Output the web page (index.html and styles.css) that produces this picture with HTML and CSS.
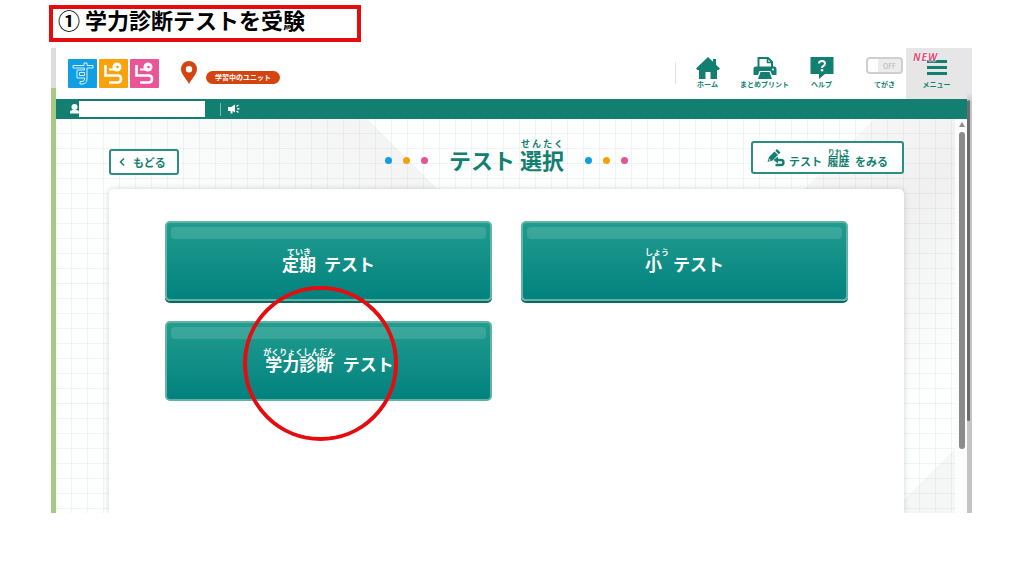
FILE: index.html
```html
<!DOCTYPE html>
<html lang="ja">
<head>
    <meta charset="UTF-8">
    <title>学力診断テストを受験</title>
    <link rel="stylesheet" href="styles.css">
</head>
<body>
    <h1 class="step-title">① 学力診断テストを受験</h1>

    <div class="window">
        <div class="edge edge-left"></div>

        <div class="app">
            <header class="header">
                <svg class="logo" viewBox="0 0 91 29" fill="none" role="img" aria-label="すらら">
                    <rect width="29" height="29" rx="1" fill="#109fe2"/>
                    <rect x="31" width="29" height="29" rx="1" fill="#f8a30c"/>
                    <rect x="62" width="29" height="29" rx="1" fill="#ea5598"/>
                    <path d="M5 6.500H16V4H19V6.500H25V9H19V20Q19 25 14 25H12V22.500H14Q16.500 22.500 16.500 20V19H9V11H16.500V9H5ZM11.500 13.500V16.500H16.500V13.500Z" stroke="#d9f2fc" stroke-width="1"/>
                    <g stroke="#fff" stroke-width="2.600">
                        <path d="M37.500 6V16.500H50Q53 16.500 53 20T49.500 23.500H41"/>
                        <path d="M68.500 6V16.500H81Q84 16.500 84 20T80.500 23.500H72"/>
                    </g>
                    <path d="M41 10.500H47M72 10.500H78" stroke="#fff" stroke-width="2"/>
                    <circle cx="49" cy="8" r="4.500" fill="#fff"/>
                    <circle cx="80" cy="8" r="4.500" fill="#fff"/>
                    <circle cx="49.500" cy="8" r="1.300" fill="#f8a30c"/>
                    <circle cx="80.500" cy="8" r="1.300" fill="#ea5598"/>
                </svg>
                <svg class="pin" viewBox="0 0 16 23">
                    <path fill="#d3440f" fill-rule="evenodd" d="M8 0a8 8 0 0 0-8 8c0 5.500 5 9 8 15 3-6 8-9.500 8-15a8 8 0 0 0-8-8zm0 5a3.200 3.200 0 1 1 0 6.400A3.200 3.200 0 0 1 8 5z"/>
                </svg>
                <span class="unit-badge">学習中のユニット</span>

                <nav class="nav">
                    <a href="#" class="nav-item">
                        <svg class="nav-icon" viewBox="0 0 24 24" fill="currentColor">
                            <path d="M12 1 17 5.800V3h3v5.700l4 3.800-1.500 1.500H21v9h-6.500v-7h-5v7H3v-9H1.500L0 12.500z"/>
                        </svg>
                        ホーム
                    </a>
                    <a href="#" class="nav-item">
                        <svg class="nav-icon" viewBox="0 0 24 24">
                            <path d="M5.500 12V2h9.500l4 4v6" fill="#fff" stroke="currentColor" stroke-width="2"/>
                            <path d="M14.500 2v4.500H19" fill="none" stroke="currentColor" stroke-width="1.500"/>
                            <path d="M3 10.500h18a2.500 2.500 0 0 1 2.500 2.500v6H19l-1.500-4h-11L5 19H.5v-6A2.500 2.500 0 0 1 3 10.500z" fill="currentColor"/>
                            <path d="M7.500 16h9l2.500 7H5z" fill="currentColor"/>
                            <circle cx="20" cy="13.500" r="1" fill="#fff"/>
                        </svg>
                        まとめプリント
                    </a>
                    <a href="#" class="nav-item">
                        <svg class="nav-icon" viewBox="0 0 24 24">
                            <path d="M.5 1h23v17H15l-6 5V18H.5z" fill="currentColor"/>
                            <path d="M9 7.500Q9 5 12 5t3 2.500Q15 9 13.500 9.800 12 10.600 12 12" fill="none" stroke="#fff" stroke-width="2"/>
                            <circle cx="12" cy="14.200" r="1.300" fill="#fff"/>
                        </svg>
                        ヘルプ
                    </a>
                </nav>

                <label class="writing">
                    <input type="checkbox" class="switch-input">
                    <span class="switch">OFF</span>
                    てがき
                </label>

                <button type="button" class="menu">
                    <span class="new">NEW</span>
                    <span class="bars"></span>
                    メニュー
                </button>
            </header>

            <div class="user-bar">
                <svg class="user-icon" viewBox="0 0 9 10" fill="#fff">
                    <circle cx="4.500" cy="3" r="3"/>
                    <path d="M0 9.500V8q0-2 3-2h3q3 0 3 2v1.500z"/>
                </svg>
                <span class="user-name"></span>
                <span class="bar-line"></span>
                <svg class="horn" viewBox="0 0 12 10" fill="#fff">
                    <path d="M0 3h3l4-2.500v8L4.500 7v2.500h-2V7H0z"/>
                    <path d="M8.500 2.500 10.500 1M9 4.800h2.500M8.500 7l2 1.500" stroke="#fff" stroke-width="1.200"/>
                </svg>
            </div>

            <div class="view">
                <main class="main">
                    <div class="heading">
                        <button type="button" class="outline-button back">
                            <svg class="chevron" viewBox="0 0 6 8" fill="none" stroke="currentColor" stroke-width="1.500"><path d="M5 .5 1.500 4 5 7.500"/></svg>
                            もどる
                        </button>
                        <div class="title">
                            <span class="dots"><i></i><i></i><i></i></span>
                            <h2>テスト <ruby>選択<rt>せんたく</rt></ruby></h2>
                            <span class="dots"><i></i><i></i><i></i></span>
                        </div>
                        <button type="button" class="outline-button history">
                            <svg class="pencil" viewBox="0 0 18 18" fill="none">
                                <path d="M7.500 2.500 11 6l-5.500 5.500L.5 13 2 8z" fill="currentColor"/>
                                <path d="M8.300 1.700 10 0l3.500 3.500-1.700 1.700z" fill="currentColor"/>
                                <path d="M2.300 9.800 1.800 11.700 3.700 11.200z" fill="#fff"/>
                                <path d="M9.500 11H14a2.500 2.500 0 0 1 0 5H8.500" stroke="currentColor" stroke-width="2.400"/>
                                <path d="M11 7.500v7L6.500 11z" fill="currentColor"/>
                            </svg>
                            <span>テスト <ruby>履歴<rt>りれき</rt></ruby> をみる</span>
                        </button>
                    </div>

                    <div class="panel">
                        <button type="button" class="test-button"><span><ruby>定期<rt>ていき</rt></ruby> テスト</span></button>
                        <button type="button" class="test-button"><span><ruby class="narrow">小<rt>しょう</rt></ruby> テスト</span></button>
                        <div class="marked">
                            <button type="button" class="test-button pressed"><span><ruby>学力診断<rt>がくりょくしんだん</rt></ruby> テスト</span></button>
                            <div class="circle"></div>
                        </div>
                    </div>
                </main>
                <div class="scrollbar">
                    <div class="scroll-arrow"></div>
                    <div class="scroll-thumb"></div>
                </div>
            </div>
        </div>

        <div class="edge edge-right">
            <div class="outer-thumb"></div>
        </div>
    </div>
</body>
</html>
```

FILE: styles.css
```css
* {
    box-sizing: border-box;
}
body {
    font-family: "Noto Sans CJK JP", sans-serif;
    display: flex;
    flex-direction: column;
    min-height: 100vh;
    margin: 0;
    padding: 5px 52px 63px 49px;
    background-color: #fff;
    color: #127f70;
}
button {
    font-family: inherit;
    color: inherit;
    cursor: pointer;
}
.step-title {
    align-self: flex-start;
    margin: 0;
    padding: 0 52px 8px 5px;
    border: 4px solid #e60b0f;
    font-size: 22px;
    line-height: 21px;
    color: #000;
}
.window {
    flex: 1;
    display: flex;
    margin: 6px 0 0 2px;
}
.edge {
    width: 5px;
}
.edge-left {
    background: linear-gradient(#dcdde0 40px, #a9c986 40px);
}
.edge-right {
    padding-top: 52px;
    background: linear-gradient(#e6e6ea 45px, #c4c4c4 55px);
}
.outer-thumb {
    width: 3px;
    height: 321px;
    border-radius: 2px;
    background-color: #6c6c6c;
}
.app {
    flex: 1;
    display: flex;
    flex-direction: column;
}

/* header */
.header {
    display: flex;
    height: 51px;
    padding-left: 12px;
    font-size: 7px;
    font-weight: bold;
    line-height: 10px;
}
.logo {
    width: 91px;
    height: 29px;
    margin-top: 11px;
}
.pin {
    width: 16px;
    height: 23px;
    margin: 13px 9px 0 22px;
}
.unit-badge {
    align-self: flex-start;
    margin-top: 23px;
    padding: 1px 9px 2px;
    border-radius: 7px;
    background-color: #d3440f;
    color: #fff;
}
.nav {
    display: flex;
    margin: 8px 16px 0 auto;
}
.nav::before {
    content: "";
    width: 1px;
    height: 22px;
    margin: 6px 3px 0 0;
    background-color: #e2e2e2;
}
.nav-item {
    display: flex;
    flex-direction: column;
    align-items: center;
    width: 57px;
    color: inherit;
    line-height: 8px;
    text-decoration: none;
    white-space: nowrap;
}
.nav-icon {
    width: 24px;
    height: 24px;
}
.writing {
    display: flex;
    flex-direction: column;
    align-items: center;
    gap: 5px;
    margin: 9px 3px 0 0;
    position: relative;
}
.switch-input {
    position: absolute;
    opacity: 0;
    margin: 0;
}
.switch {
    width: 37px;
    height: 17px;
    padding: 3px 5px 0 0;
    border: 2px solid #cfcfcf;
    border-radius: 4px;
    background: linear-gradient(90deg, #fff 10px, #ececec 10px);
    color: #b5b5b5;
    text-align: right;
    font-weight: normal;
    line-height: 8px;
}
.menu {
    display: flex;
    flex-direction: column;
    align-items: center;
    gap: 4px;
    width: 61px;
    padding: 12px 0 0;
    border: 0;
    background-color: #e6e6e6;
    font-size: 7px;
    font-weight: bold;
    line-height: 10px;
    position: relative;
}
.bars {
    width: 20px;
    height: 15px;
    background: linear-gradient(#127f70 3px, transparent 3px 6px, #127f70 6px 9px, transparent 9px 12px, #127f70 12px);
}
.new {
    position: absolute;
    left: 7px;
    top: 4px;
    font-family: "Open Sans", sans-serif;
    font-size: 10px;
    font-style: italic;
    letter-spacing: 1px;
    color: #e44c7a;
    text-shadow: 0 0 2px #fff, 0 0 2px #fff, 0 0 2px #fff;
}

/* green bar with the student name */
.user-bar {
    display: flex;
    align-items: center;
    height: 20px;
    padding-left: 14px;
    background-color: #127f70;
}
.user-icon {
    width: 9px;
    height: 10px;
}
.user-name {
    width: 126px;
    height: 16px;
    background-color: #fff;
}
.bar-line {
    width: 1px;
    height: 13px;
    margin: 0 7px 0 15px;
    background-color: #7fb9b0;
}
.horn {
    width: 12px;
    height: 10px;
}

/* page */
.view {
    flex: 1;
    display: flex;
}
.main {
    flex: 1;
    display: flex;
    flex-direction: column;
    padding: 22px 51px 0 53px;
    overflow: hidden;
    background:
        repeating-linear-gradient(transparent 0 14px, rgba(120, 150, 145, 0.1) 14px 15px),
        repeating-linear-gradient(90deg, transparent 0 15px, rgba(120, 150, 145, 0.1) 15px 16px),
        linear-gradient(45deg, transparent 50%, #f4f4f4 89%, transparent 89%) 0 0 / 400px 400px no-repeat,
        linear-gradient(135deg, transparent 40%, #f6f6f6 40%, #f0f0f0 55%, transparent 80%) 100% 0 / 400px 400px no-repeat,
        linear-gradient(135deg, transparent 84%, #f5f7f6 84%) 100% 100% / 200px 200px no-repeat,
        #fdfefe;
}
.heading {
    display: grid;
    grid-template-columns: 1fr auto 1fr;
    height: 48px;
}
.outline-button {
    display: flex;
    align-items: center;
    border: 2px solid #2b8e80;
    border-radius: 3px;
    background-color: #fff;
    font-size: 11px;
    font-weight: bold;
    line-height: 16px;
    white-space: nowrap;
}
.back {
    justify-self: start;
    gap: 8px;
    height: 26px;
    margin-top: 8px;
    padding: 0 11px 0 8px;
}
.chevron {
    width: 6px;
    height: 8px;
}
.history {
    justify-self: end;
    align-items: flex-end;
    gap: 4px;
    height: 33px;
    padding: 0 14px 3px;
}
.history ruby {
    margin: 0 3px;
}
.history rt {
    font-size: 7px;
}
.pencil {
    width: 18px;
    height: 18px;
    margin-bottom: 2px;
}
.title {
    display: flex;
    align-items: flex-start;
    gap: 21px;
}
.title h2 {
    margin: -2px 0 0;
    font-size: 22px;
    line-height: 30px;
}
.title rt {
    font-size: 9px;
    line-height: 5px;
}
.dots {
    display: flex;
    gap: 11px;
    margin-top: 16px;
}
.dots i {
    width: 7px;
    height: 7px;
    border-radius: 50%;
    background-color: #109fe2;
}
.dots i:nth-child(2) {
    background-color: #f0a30f;
}
.dots i:nth-child(3) {
    background-color: #e2558f;
}
rt {
    line-height: 1;
}
.panel {
    flex: 1;
    display: grid;
    grid-template-columns: 1fr 1fr;
    grid-auto-rows: 80px;
    gap: 20px 29px;
    padding: 32px 56px 0;
    border-radius: 5px 5px 0 0;
    background-color: #fff;
    box-shadow: 0 0 6px rgba(0,0,0,0.16);
}
.test-button {
    width: 100%;
    height: 80px;
    padding: 4px 4px 0;
    border: 2px solid #62b3a7;
    border-radius: 5px;
    background: linear-gradient(#219c8e, #02827f);
    box-shadow: 0 2px 0 #0b6a60;
    color: #fff;
    font-size: 17px;
    font-weight: bold;
    line-height: 24px;
    display: flex;
    flex-direction: column;
    align-items: center;
}
.test-button::before {
    content: "";
    width: 100%;
    height: 12px;
    margin-bottom: 8px;
    border-radius: 4px;
    background-color: rgba(255,255,255,0.13);
}
.test-button rt {
    font-size: 8px;
    line-height: 12px;
}
.test-button ruby {
    ruby-align: center;
    margin-right: 4px;
}
.test-button .narrow {
    ruby-align: start;
}
.pressed {
    box-shadow: none;
}
.marked {
    position: relative;
}
.circle {
    position: absolute;
    left: 78px;
    top: -35px;
    width: 155px;
    height: 155px;
    border: 4px solid #e60b0f;
    border-radius: 50%;
    pointer-events: none;
}
.scrollbar {
    width: 12px;
    padding: 3px 2px 0 4px;
    background-color: #fcfcfc;
}
.scroll-arrow {
    width: 6px;
    height: 5px;
    background-color: #8b8b8b;
    clip-path: polygon(50% 0, 100% 100%, 0 100%);
}
.scroll-thumb {
    width: 6px;
    height: 317px;
    margin-top: 5px;
    border-radius: 3px;
    background-color: #8b8b8b;
}
```
